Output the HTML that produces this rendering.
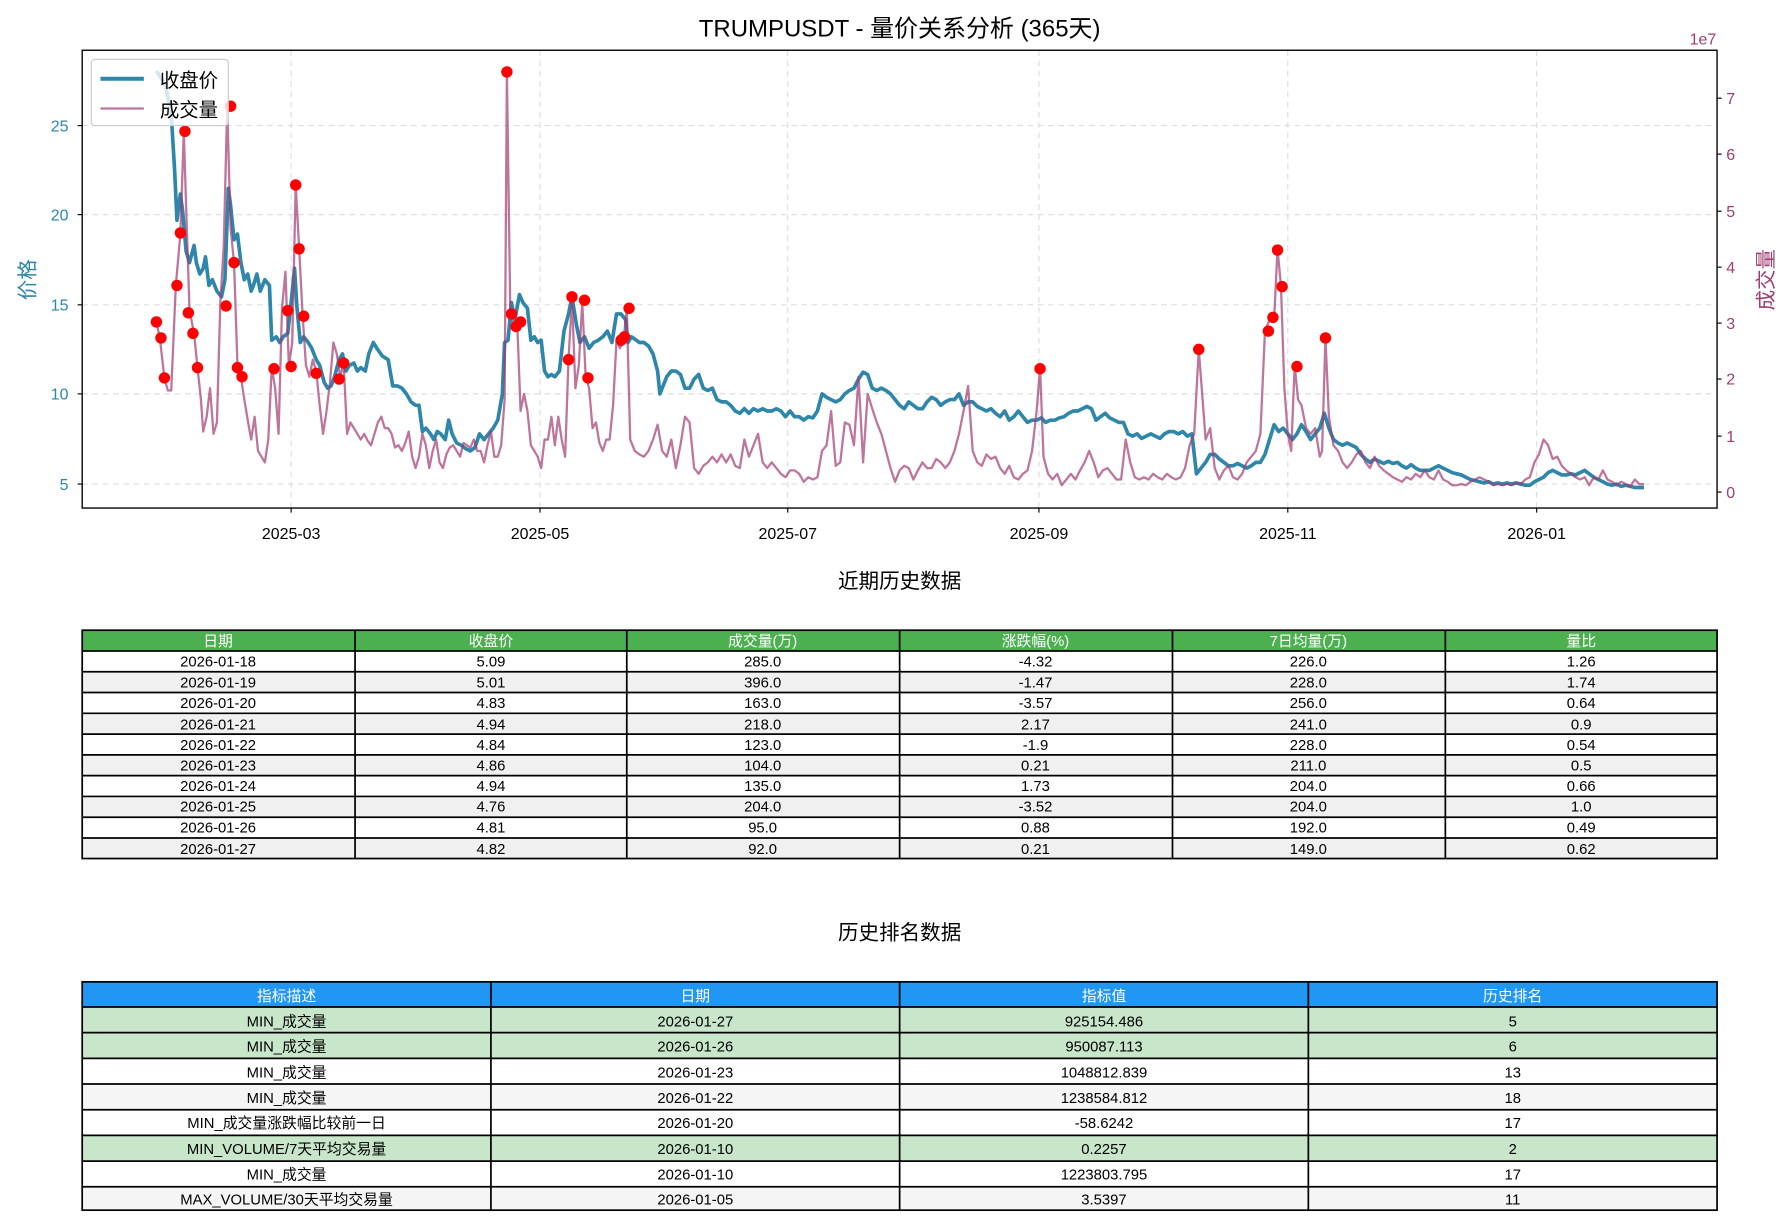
<!DOCTYPE html>
<html><head><meta charset="utf-8"><style>
html,body{margin:0;padding:0;background:#fff}
svg{display:block}
text{font-family:"WenQuanYi Zen Hei","Liberation Sans","Noto Sans CJK SC",sans-serif}
</style></head><body>
<svg width="1781" height="1220" viewBox="0 0 1560 1068.6" xmlns="http://www.w3.org/2000/svg">
<rect width="1560" height="1069" fill="#fff"/>
<text x="788" y="32" font-size="21" text-anchor="middle" fill="#000">TRUMPUSDT - 量价关系分析 (365天)</text>
<!-- grid -->
<g stroke="#ddd" stroke-dasharray="5,4" stroke-width="1">
<line x1="72" x2="1504" y1="110" y2="110"/><line x1="72" x2="1504" y1="188" y2="188"/><line x1="72" x2="1504" y1="267" y2="267"/><line x1="72" x2="1504" y1="345" y2="345"/><line x1="72" x2="1504" y1="424" y2="424"/>
<line x1="255" x2="255" y1="44" y2="445"/><line x1="473" x2="473" y1="44" y2="445"/><line x1="690" x2="690" y1="44" y2="445"/><line x1="910" x2="910" y1="44" y2="445"/><line x1="1128" x2="1128" y1="44" y2="445"/><line x1="1346" x2="1346" y1="44" y2="445"/>
</g>
<!-- price -->
<polyline fill="none" stroke="#2e86ab" stroke-width="3.2" stroke-linejoin="round" points="137,62 145,75 150,100 153,150 155,193 158,170 160,185 163,220 166,230 170,215 172,230 175,240 178,235 180,225 183,250 186,245 190,255 194,260 197,245 200,165 202,180 205,210 208,205 211,230 214,245 217,240 220,255 222,250 225,240 228,255 232,245 236,250 238,298 242,295 245,300 248,295 252,292 255,265 258,235 260,268 263,300 266,295 270,300 273,305 277,315 280,320 284,335 287,340 290,338 293,330 297,315 300,310 303,325 306,320 310,318 313,325 316,322 320,325 323,310 327,300 330,305 335,312 340,315 344,338 348,338 352,340 356,345 360,352 364,355 367,355 370,378 373,375 377,380 380,385 383,378 386,380 390,385 393,368 396,380 400,388 404,390 408,393 412,395 416,392 420,380 424,385 428,380 432,375 436,368 440,345 442,300 445,298 448,265 451,280 455,258 458,265 462,270 465,298 468,295 471,300 474,298 477,325 480,330 483,328 486,330 490,325 494,290 498,275 501,260 505,285 508,300 512,295 516,305 520,300 524,298 528,295 532,290 536,300 540,275 544,275 548,280 550,300 553,295 556,297 560,300 564,300 568,303 572,310 576,325 578,345 580,340 584,330 588,325 592,325 596,328 600,340 604,340 608,332 612,328 616,340 620,342 624,340 628,350 632,352 636,352 640,355 644,360 648,362 652,358 656,362 660,358 664,360 668,358 672,360 676,360 680,358 684,360 688,365 692,360 696,365 700,365 704,368 708,365 712,366 716,360 720,345 724,348 728,350 732,352 736,350 740,345 744,342 748,340 752,332 756,326 760,328 764,340 768,342 772,340 776,342 780,345 784,350 788,355 792,358 796,352 800,355 804,358 808,358 812,352 816,348 820,350 824,355 828,352 832,350 836,350 840,345 844,355 848,352 852,352 856,356 860,358 864,360 868,358 872,362 876,365 880,360 884,368 888,365 892,360 896,365 900,370 904,368 908,368 912,366 916,370 920,368 924,368 928,366 932,365 936,362 940,360 944,360 948,358 952,356 956,358 960,368 964,365 968,362 972,366 976,368 980,370 984,370 988,380 992,382 996,380 1000,384 1004,382 1008,380 1012,382 1016,384 1020,380 1024,378 1028,378 1032,380 1036,378 1040,382 1044,380 1048,415 1052,410 1056,405 1060,398 1064,398 1068,402 1072,405 1076,408 1080,408 1084,406 1088,408 1092,410 1096,408 1100,405 1104,405 1108,398 1112,385 1116,372 1120,378 1124,375 1128,380 1132,385 1136,380 1140,372 1144,378 1148,385 1152,380 1156,375 1160,362 1164,375 1168,385 1172,388 1176,390 1180,388 1184,390 1188,392 1192,398 1196,402 1200,405 1204,402 1208,404 1212,406 1216,404 1220,406 1224,405 1228,408 1232,410 1236,407 1240,410 1244,412 1248,412 1252,412 1256,410 1260,408 1264,410 1268,412 1272,414 1276,415 1280,416 1284,418 1288,420 1292,421 1296,422 1300,423 1304,422 1308,424 1312,423 1316,424 1320,423 1324,424 1328,423 1332,424 1336,425 1340,425 1344,422 1348,420 1352,418 1356,414 1360,412 1364,414 1368,416 1372,416 1376,415 1380,416 1384,414 1388,412 1392,415 1396,418 1400,420 1404,422 1408,424 1412,425 1416,424 1420,426 1424,425 1428,426 1432,427 1436,427 1440,427"/>
<!-- volume -->
<polyline fill="none" stroke="#a23b72" stroke-opacity="0.7" stroke-width="2" stroke-linejoin="round" points="137,282 140,296 144,331 147,342 150,342 154,250 158,205 161,115 163,180 166,272 170,292 173,322 176,350 178,378 181,365 184,340 187,380 190,370 193,265 196,215 199,93 202,200 205,230 208,320 211,330 214,350 217,368 220,385 223,365 226,395 229,400 232,405 235,385 238,322 241,340 244,380 247,270 250,238 253,320 256,300 259,162 262,217 265,275 268,320 271,330 274,315 277,325 280,355 283,380 286,360 289,335 292,300 295,310 298,330 301,318 304,380 307,370 310,375 313,380 316,385 319,380 322,386 325,390 328,380 331,370 334,365 337,375 340,375 343,380 346,392 349,390 352,395 355,388 358,378 361,400 364,410 367,400 370,380 373,390 376,410 379,395 382,385 385,405 388,410 391,398 394,392 397,390 400,395 403,400 406,388 409,390 412,392 415,385 418,395 421,395 424,405 427,390 430,378 433,400 436,400 439,390 442,350 444,63 447,275 450,285 453,282 456,360 459,345 462,360 465,390 468,395 471,400 474,410 477,385 480,385 483,365 486,390 489,365 492,385 495,400 498,314 501,262 504,340 507,320 510,264 513,330 516,340 519,375 522,370 525,388 528,395 531,385 534,385 537,355 540,298 543,305 546,300 549,270 552,385 556,395 560,398 564,400 568,395 572,385 576,372 580,395 584,400 588,385 592,410 596,390 600,365 604,370 608,410 612,415 616,408 620,405 624,400 628,405 632,398 636,405 640,398 644,408 648,410 652,385 656,400 660,390 664,380 668,405 672,410 676,405 680,410 684,415 688,418 692,412 696,412 700,415 704,422 708,418 712,420 716,418 720,395 724,390 728,360 732,408 736,405 740,370 744,372 748,390 752,330 756,405 760,345 764,358 768,370 772,380 776,395 780,410 784,422 788,412 792,408 796,410 800,420 804,412 808,405 812,410 816,410 820,402 824,405 828,410 832,405 836,395 840,380 844,360 848,338 852,395 856,405 860,408 864,398 868,402 872,400 876,410 880,415 884,408 888,418 892,420 896,415 900,412 904,395 908,360 911,322 914,400 918,415 922,420 926,415 930,425 934,420 938,415 942,420 946,412 950,405 954,395 958,405 962,418 966,412 970,410 974,415 978,420 982,420 986,385 990,405 994,418 998,420 1002,418 1006,420 1010,415 1014,418 1018,420 1022,415 1026,418 1030,420 1034,418 1038,410 1042,390 1046,380 1050,306 1053,345 1056,385 1060,375 1064,410 1068,420 1072,412 1076,408 1080,418 1084,420 1088,415 1092,405 1096,400 1100,395 1104,380 1108,290 1112,280 1116,280 1119,218 1122,250 1125,340 1128,380 1131,395 1134,320 1137,350 1140,355 1144,375 1148,380 1152,375 1156,400 1158,395 1161,296 1164,365 1168,390 1172,395 1176,405 1180,410 1184,405 1188,398 1192,395 1196,405 1200,410 1204,400 1208,408 1212,412 1216,415 1220,418 1224,420 1228,422 1232,418 1236,420 1240,415 1244,418 1248,412 1252,418 1256,420 1260,412 1264,420 1268,422 1272,425 1276,425 1280,424 1284,425 1288,422 1292,420 1296,418 1300,420 1304,422 1308,425 1312,424 1316,425 1320,424 1324,425 1328,423 1332,424 1336,420 1340,418 1344,405 1348,398 1352,385 1356,390 1360,402 1364,400 1368,408 1372,412 1376,415 1380,418 1384,420 1388,418 1392,425 1396,418 1400,420 1404,412 1408,420 1412,422 1416,425 1420,422 1424,424 1428,426 1432,420 1436,424 1440,424"/>
<g fill="#ff0000">
<circle cx="137" cy="282" r="5"/><circle cx="141" cy="296" r="5"/><circle cx="144" cy="331" r="5"/><circle cx="155" cy="250" r="5"/><circle cx="158" cy="204" r="5"/><circle cx="162" cy="115" r="5"/><circle cx="165" cy="274" r="5"/><circle cx="169" cy="292" r="5"/><circle cx="173" cy="322" r="5"/><circle cx="198" cy="268" r="5"/><circle cx="202" cy="93" r="5"/><circle cx="205" cy="230" r="5"/><circle cx="208" cy="322" r="5"/><circle cx="212" cy="330" r="5"/><circle cx="240" cy="323" r="5"/><circle cx="252" cy="272" r="5"/><circle cx="255" cy="321" r="5"/><circle cx="259" cy="162" r="5"/><circle cx="262" cy="218" r="5"/><circle cx="266" cy="277" r="5"/><circle cx="277" cy="327" r="5"/><circle cx="297" cy="332" r="5"/><circle cx="301" cy="318" r="5"/><circle cx="444" cy="63" r="5"/><circle cx="448" cy="275" r="5"/><circle cx="452" cy="286" r="5"/><circle cx="456" cy="282" r="5"/><circle cx="498" cy="315" r="5"/><circle cx="501" cy="260" r="5"/><circle cx="512" cy="263" r="5"/><circle cx="515" cy="331" r="5"/><circle cx="544" cy="298" r="5"/><circle cx="547" cy="295" r="5"/><circle cx="551" cy="270" r="5"/><circle cx="911" cy="323" r="5"/><circle cx="1050" cy="306" r="5"/><circle cx="1111" cy="290" r="5"/><circle cx="1115" cy="278" r="5"/><circle cx="1119" cy="219" r="5"/><circle cx="1123" cy="251" r="5"/><circle cx="1136" cy="321" r="5"/><circle cx="1161" cy="296" r="5"/>
</g>
<rect x="72" y="44" width="1432" height="401" fill="none" stroke="#000" stroke-width="1.2"/>
<!-- legend -->
<rect x="80" y="52" width="120" height="58" rx="3" fill="#fff" fill-opacity="0.8" stroke="#ccc"/>
<line x1="88" x2="126" y1="69" y2="69" stroke="#2e86ab" stroke-width="3.5"/>
<line x1="88" x2="126" y1="95" y2="95" stroke="#a23b72" stroke-opacity="0.7" stroke-width="2"/>
<text x="140" y="76" font-size="17">收盘价</text>
<text x="140" y="102" font-size="17">成交量</text>
<!-- left ticks -->
<g fill="#2e86ab" font-size="14" text-anchor="end">
<text x="60" y="115">25</text><text x="60" y="193">20</text><text x="60" y="272">15</text><text x="60" y="350">10</text><text x="60" y="429">5</text>
</g>
<g stroke="#000"><line x1="68" x2="72" y1="110" y2="110"/><line x1="68" x2="72" y1="188" y2="188"/><line x1="68" x2="72" y1="267" y2="267"/><line x1="68" x2="72" y1="345" y2="345"/><line x1="68" x2="72" y1="424" y2="424"/>
<line x1="1504" x2="1508" y1="431" y2="431"/><line x1="1504" x2="1508" y1="382" y2="382"/><line x1="1504" x2="1508" y1="332" y2="332"/><line x1="1504" x2="1508" y1="283" y2="283"/><line x1="1504" x2="1508" y1="234" y2="234"/><line x1="1504" x2="1508" y1="185" y2="185"/><line x1="1504" x2="1508" y1="135" y2="135"/><line x1="1504" x2="1508" y1="86" y2="86"/>
<line y1="445" y2="449" x1="255" x2="255"/><line y1="445" y2="449" x1="473" x2="473"/><line y1="445" y2="449" x1="690" x2="690"/><line y1="445" y2="449" x1="910" x2="910"/><line y1="445" y2="449" x1="1128" x2="1128"/><line y1="445" y2="449" x1="1346" x2="1346"/></g>
<text transform="translate(30,245) rotate(-90)" font-size="18" fill="#2e86ab" text-anchor="middle">价格</text>
<g fill="#a23b72" font-size="14">
<text x="1512" y="436">0</text><text x="1512" y="387">1</text><text x="1512" y="337">2</text><text x="1512" y="288">3</text><text x="1512" y="239">4</text><text x="1512" y="190">5</text><text x="1512" y="140">6</text><text x="1512" y="91">7</text>
<text x="1480" y="39">1e7</text>
</g>
<text transform="translate(1553,245) rotate(-90)" font-size="18" fill="#a23b72" text-anchor="middle">成交量</text>
<g font-size="14" text-anchor="middle">
<text x="255" y="472">2025-03</text><text x="473" y="472">2025-05</text><text x="690" y="472">2025-07</text><text x="910" y="472">2025-09</text><text x="1128" y="472">2025-11</text><text x="1346" y="472">2026-01</text>
</g>
<!-- table 1 -->
<text x="788" y="515" font-size="18" text-anchor="middle">近期历史数据</text>
<g font-size="13" text-anchor="middle">
<rect x="72" y="552" width="1432" height="18.2" fill="#4caf50"/>
<rect x="72" y="588.4" width="1432" height="18.2" fill="#f0f0f0"/>
<rect x="72" y="624.8" width="1432" height="18.2" fill="#f0f0f0"/>
<rect x="72" y="661.2" width="1432" height="18.2" fill="#f0f0f0"/>
<rect x="72" y="697.6" width="1432" height="18.2" fill="#f0f0f0"/>
<rect x="72" y="734" width="1432" height="18.2" fill="#f0f0f0"/>
<g fill="#fff"><text x="191" y="566">日期</text><text x="430" y="566">收盘价</text><text x="668" y="566">成交量(万)</text><text x="907" y="566">涨跌幅(%)</text><text x="1146" y="566">7日均量(万)</text><text x="1385" y="566">量比</text></g>
<text y="584"><tspan x="191">2026-01-18</tspan><tspan x="430">5.09</tspan><tspan x="668">285.0</tspan><tspan x="907">-4.32</tspan><tspan x="1146">226.0</tspan><tspan x="1385">1.26</tspan></text>
<text y="602"><tspan x="191">2026-01-19</tspan><tspan x="430">5.01</tspan><tspan x="668">396.0</tspan><tspan x="907">-1.47</tspan><tspan x="1146">228.0</tspan><tspan x="1385">1.74</tspan></text>
<text y="620"><tspan x="191">2026-01-20</tspan><tspan x="430">4.83</tspan><tspan x="668">163.0</tspan><tspan x="907">-3.57</tspan><tspan x="1146">256.0</tspan><tspan x="1385">0.64</tspan></text>
<text y="639"><tspan x="191">2026-01-21</tspan><tspan x="430">4.94</tspan><tspan x="668">218.0</tspan><tspan x="907">2.17</tspan><tspan x="1146">241.0</tspan><tspan x="1385">0.9</tspan></text>
<text y="657"><tspan x="191">2026-01-22</tspan><tspan x="430">4.84</tspan><tspan x="668">123.0</tspan><tspan x="907">-1.9</tspan><tspan x="1146">228.0</tspan><tspan x="1385">0.54</tspan></text>
<text y="675"><tspan x="191">2026-01-23</tspan><tspan x="430">4.86</tspan><tspan x="668">104.0</tspan><tspan x="907">0.21</tspan><tspan x="1146">211.0</tspan><tspan x="1385">0.5</tspan></text>
<text y="693"><tspan x="191">2026-01-24</tspan><tspan x="430">4.94</tspan><tspan x="668">135.0</tspan><tspan x="907">1.73</tspan><tspan x="1146">204.0</tspan><tspan x="1385">0.66</tspan></text>
<text y="711"><tspan x="191">2026-01-25</tspan><tspan x="430">4.76</tspan><tspan x="668">204.0</tspan><tspan x="907">-3.52</tspan><tspan x="1146">204.0</tspan><tspan x="1385">1.0</tspan></text>
<text y="729"><tspan x="191">2026-01-26</tspan><tspan x="430">4.81</tspan><tspan x="668">95.0</tspan><tspan x="907">0.88</tspan><tspan x="1146">192.0</tspan><tspan x="1385">0.49</tspan></text>
<text y="748"><tspan x="191">2026-01-27</tspan><tspan x="430">4.82</tspan><tspan x="668">92.0</tspan><tspan x="907">0.21</tspan><tspan x="1146">149.0</tspan><tspan x="1385">0.62</tspan></text>
<g stroke="#000" stroke-width="1.5" fill="none">
<rect x="72" y="552" width="1432" height="200"/>
<path d="M72 570.2H1504M72 588.4H1504M72 606.6H1504M72 624.8H1504M72 643H1504M72 661.2H1504M72 679.4H1504M72 697.6H1504M72 715.8H1504M72 734H1504M311 552V752M549 552V752M788 552V752M1027 552V752M1266 552V752"/>
</g>
</g>
<!-- table 2 -->
<text x="788" y="823" font-size="18" text-anchor="middle">历史排名数据</text>
<g font-size="13" text-anchor="middle">
<rect x="72" y="860" width="1432" height="22" fill="#2196f3"/>
<rect x="72" y="882" width="1432" height="45" fill="#c8e6c9"/>
<rect x="72" y="949.5" width="1432" height="22.5" fill="#f5f5f5"/>
<rect x="72" y="994.5" width="1432" height="22.5" fill="#c8e6c9"/>
<rect x="72" y="1039.5" width="1432" height="20.5" fill="#f5f5f5"/>
<g fill="#fff"><text x="251" y="877">指标描述</text><text x="609" y="877">日期</text><text x="967" y="877">指标值</text><text x="1325" y="877">历史排名</text></g>
<text y="899"><tspan x="251">MIN_成交量</tspan><tspan x="609">2026-01-27</tspan><tspan x="967">925154.486</tspan><tspan x="1325">5</tspan></text>
<text y="921"><tspan x="251">MIN_成交量</tspan><tspan x="609">2026-01-26</tspan><tspan x="967">950087.113</tspan><tspan x="1325">6</tspan></text>
<text y="944"><tspan x="251">MIN_成交量</tspan><tspan x="609">2026-01-23</tspan><tspan x="967">1048812.839</tspan><tspan x="1325">13</tspan></text>
<text y="966"><tspan x="251">MIN_成交量</tspan><tspan x="609">2026-01-22</tspan><tspan x="967">1238584.812</tspan><tspan x="1325">18</tspan></text>
<text y="988"><tspan x="251">MIN_成交量涨跌幅比较前一日</tspan><tspan x="609">2026-01-20</tspan><tspan x="967">-58.6242</tspan><tspan x="1325">17</tspan></text>
<text y="1011"><tspan x="251">MIN_VOLUME/7天平均交易量</tspan><tspan x="609">2026-01-10</tspan><tspan x="967">0.2257</tspan><tspan x="1325">2</tspan></text>
<text y="1033"><tspan x="251">MIN_成交量</tspan><tspan x="609">2026-01-10</tspan><tspan x="967">1223803.795</tspan><tspan x="1325">17</tspan></text>
<text y="1055"><tspan x="251">MAX_VOLUME/30天平均交易量</tspan><tspan x="609">2026-01-05</tspan><tspan x="967">3.5397</tspan><tspan x="1325">11</tspan></text>
<g stroke="#000" stroke-width="1.5" fill="none">
<rect x="72" y="860" width="1432" height="200"/>
<path d="M72 882H1504M72 904.5H1504M72 927H1504M72 949.5H1504M72 972H1504M72 994.5H1504M72 1017H1504M72 1039.5H1504M430 860V1060M788 860V1060M1146 860V1060"/>
</g>
</g>
</svg>
</body></html>
